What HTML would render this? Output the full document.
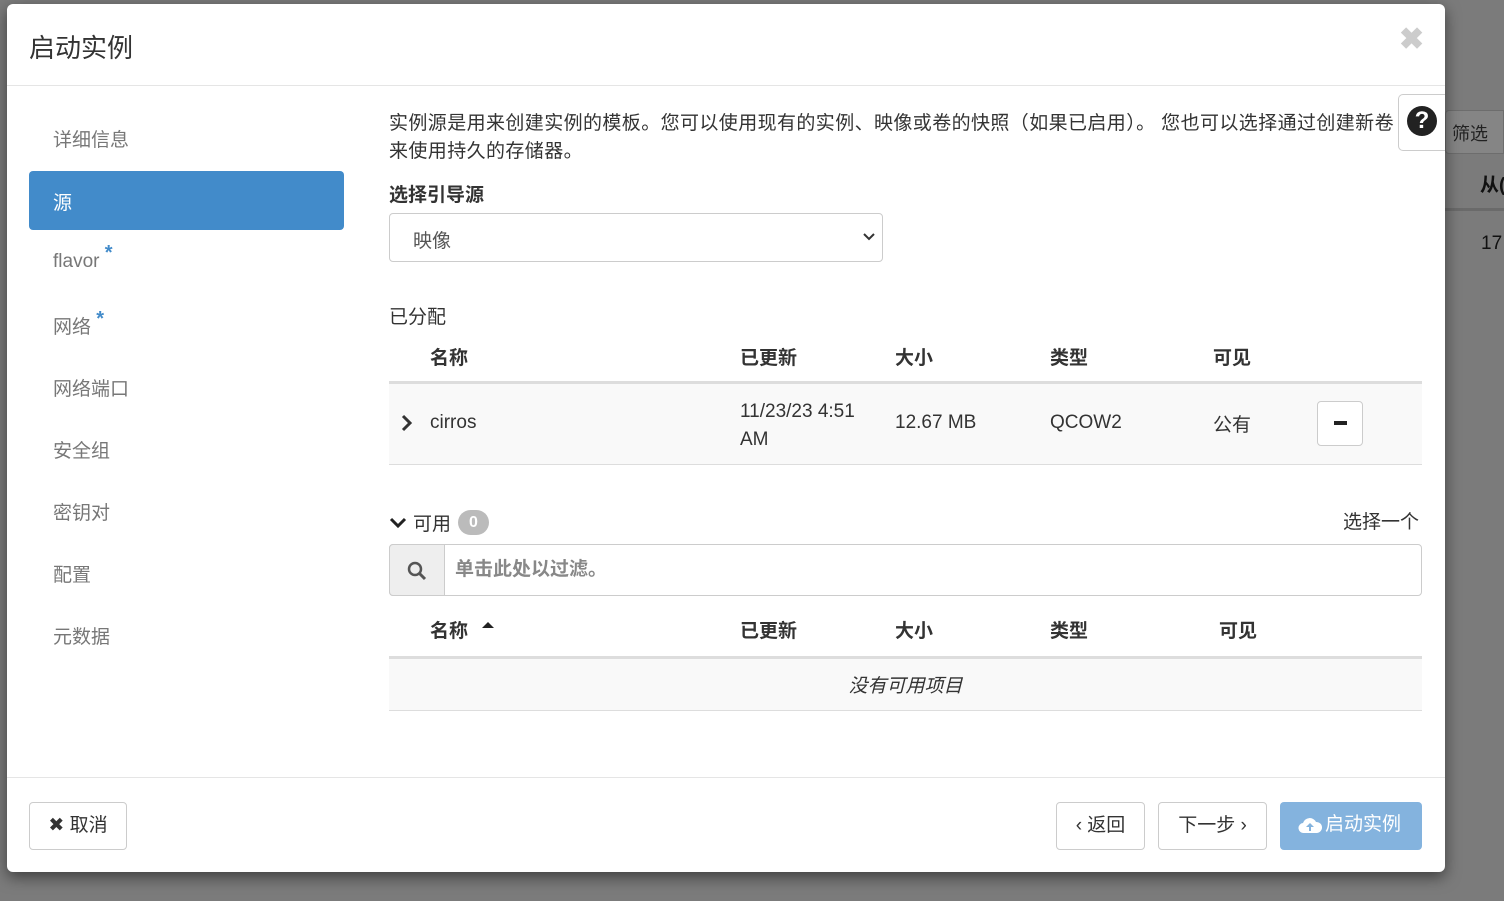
<!DOCTYPE html>
<html style="background:#7b7b7b"><head><meta charset="utf-8"><style>
*{box-sizing:border-box;margin:0;padding:0}
body{width:1504px;height:901px;background:#7b7b7b;font-family:"Liberation Sans","Noto Sans CJK SC",sans-serif;color:#333;position:relative;overflow:hidden}
.a{position:absolute;white-space:nowrap}
.modal{left:7px;top:4px;width:1438px;height:868px;background:#fff;border-radius:6px;box-shadow:0 5px 15px rgba(0,0,0,.5)}
.nav{font-size:19px;color:#777;left:46px}
.h{font-size:19px;font-weight:bold;color:#333}
.btn{border:1px solid #ccc;border-radius:4px;background:#fff;font-size:19px;text-align:center;color:#333}
.st{color:#428bca;font-size:20px;font-weight:bold;position:relative;top:-8px}
</style></head><body>
<div class="a" style="left:0;top:0;width:1504px;height:901px;background:#7b7b7b"></div>
<div class="a" style="left:1445px;top:110px;width:59px;height:44px;background:#858585;border:1px solid #6d6d6d;border-radius:4px 0 0 4px"></div>
<div class="a" style="left:1452px;top:120px;font-size:18px;color:#222">筛选</div>
<div class="a" style="left:1480px;top:170px;font-size:19px;font-weight:bold;color:#111">从(</div>
<div class="a" style="left:1445px;top:208px;width:59px;height:3px;background:#6a6a6a"></div>
<div class="a" style="left:1481px;top:233px;font-size:19px;color:#111">17</div>

<div class="a modal">
<div class="a" style="left:22px;top:24px;font-size:26px;color:#333">启动实例</div>
<div class="a" style="left:1392px;top:18px;font-size:30px;font-weight:bold;color:#ccc">✖</div>
<div class="a" style="left:0;top:81px;width:1438px;height:1px;background:#e5e5e5"></div>

<div class="a nav" style="top:121px">详细信息</div>
<div class="a" style="left:22px;top:167px;width:315px;height:59px;background:#428bca;border-radius:4px"></div>
<div class="a" style="left:46px;top:184px;font-size:19px;color:#fff">源</div>
<div class="a nav" style="top:246px">flavor <span class="st">*</span></div>
<div class="a nav" style="top:308px">网络 <span class="st">*</span></div>
<div class="a nav" style="top:370px">网络端口</div>
<div class="a nav" style="top:432px">安全组</div>
<div class="a nav" style="top:494px">密钥对</div>
<div class="a nav" style="top:556px">配置</div>
<div class="a nav" style="top:618px">元数据</div>

<div class="a" style="left:382px;top:106px;font-size:19px;line-height:28px;width:1010px;overflow:hidden;letter-spacing:0.4px">实例源是用来创建实例的模板。您可以使用现有的实例、映像或卷的快照（如果已启用）。 您也可以选择通过创建新卷<br>来使用持久的存储器。</div>
<div class="a" style="left:1391px;top:90px;width:47px;height:57px;border:1px solid #ccc;border-right:none;border-radius:5px 0 0 5px;background:#fff"></div>
<div class="a" style="left:1400px;top:102px;width:30px;height:30px;border-radius:50%;background:#222;color:#fff;font-weight:bold;font-size:24px;text-align:center;line-height:30px">?</div>

<div class="a h" style="left:382px;top:176px">选择引导源</div>
<div class="a" style="left:382px;top:209px;width:494px;height:49px;border:1px solid #ccc;border-radius:4px"></div>
<div class="a" style="left:406px;top:222px;font-size:19px;color:#555">映像</div>
<svg class="a" style="left:855px;top:227px" width="14" height="12"><path d="M2 3l5 5 5-5" stroke="#333" stroke-width="2" fill="none"/></svg>

<div class="a" style="left:382px;top:298px;font-size:19px">已分配</div>
<div class="a h" style="left:423px;top:339px">名称</div>
<div class="a h" style="left:733px;top:339px">已更新</div>
<div class="a h" style="left:888px;top:339px">大小</div>
<div class="a h" style="left:1043px;top:339px">类型</div>
<div class="a h" style="left:1206px;top:339px">可见</div>
<div class="a" style="left:382px;top:377px;width:1033px;height:84px;background:#f9f9f9;border-top:3px solid #ddd;border-bottom:1px solid #ddd"></div>
<svg class="a" style="left:393px;top:410px" width="14" height="18"><path d="M3 2l7 7-7 7" stroke="#333" stroke-width="3" fill="none"/></svg>
<div class="a" style="left:423px;top:408px;font-size:19px">cirros</div>
<div class="a" style="left:733px;top:394px;font-size:19px;line-height:28px">11/23/23 4:51<br>AM</div>
<div class="a" style="left:888px;top:408px;font-size:19px">12.67 MB</div>
<div class="a" style="left:1043px;top:408px;font-size:19px">QCOW2</div>
<div class="a" style="left:1206px;top:406px;font-size:19px">公有</div>
<div class="a btn" style="left:1310px;top:397px;width:46px;height:45px"></div>
<div class="a" style="left:1327px;top:417px;width:13px;height:4px;background:#222"></div>

<svg class="a" style="left:382px;top:512px" width="18" height="14"><path d="M2 3l7 7 7-7" stroke="#222" stroke-width="3" fill="none"/></svg>
<div class="a" style="left:406px;top:505px;font-size:19px">可用</div>
<div class="a" style="left:451px;top:506px;width:31px;height:25px;border-radius:13px;background:#bbb;color:#fff;font-size:16px;font-weight:bold;text-align:center;line-height:25px">0</div>
<div class="a" style="left:1336px;top:503px;font-size:19px">选择一个</div>
<div class="a" style="left:382px;top:540px;width:1033px;height:52px;border:1px solid #ccc;border-radius:4px"></div>
<div class="a" style="left:382px;top:540px;width:56px;height:52px;background:#eee;border:1px solid #ccc;border-radius:4px 0 0 4px"></div>
<svg class="a" style="left:400px;top:557px" width="20" height="20"><circle cx="8" cy="8" r="6" stroke="#555" stroke-width="2.5" fill="none"/><path d="M12 12l6 6" stroke="#555" stroke-width="3"/></svg>
<div class="a" style="left:448px;top:550px;font-size:19px;font-weight:bold;color:#888">单击此处以过滤。</div>

<div class="a h" style="left:423px;top:612px">名称</div>
<svg class="a" style="left:475px;top:617px" width="12" height="8"><path d="M0 7l6-6 6 6z" fill="#222"/></svg>
<div class="a h" style="left:733px;top:612px">已更新</div>
<div class="a h" style="left:888px;top:612px">大小</div>
<div class="a h" style="left:1043px;top:612px">类型</div>
<div class="a h" style="left:1212px;top:612px">可见</div>
<div class="a" style="left:382px;top:652px;width:1033px;height:55px;background:#f9f9f9;border-top:3px solid #ddd;border-bottom:1px solid #ddd"></div>
<div class="a" style="left:382px;top:667px;width:1033px;text-align:center;font-size:19px;font-style:italic">没有可用项目</div>

<div class="a" style="left:0;top:773px;width:1438px;height:1px;background:#e5e5e5"></div>
<div class="a btn" style="left:22px;top:798px;width:98px;height:48px;line-height:46px">✖ 取消</div>
<div class="a btn" style="left:1049px;top:798px;width:89px;height:48px;line-height:46px">‹ 返回</div>
<div class="a btn" style="left:1151px;top:798px;width:109px;height:48px;line-height:46px">下一步 ›</div>
<div class="a" style="left:1273px;top:798px;width:142px;height:48px;border-radius:4px;background:#84b3de;color:#fff;font-size:19px;line-height:46px;text-align:center;padding-left:24px">启动实例</div>
<svg class="a" style="left:1291px;top:812px" width="24" height="18"><path d="M6 17a5 5 0 0 1-1-10 7 7 0 0 1 13-1 5 5 0 0 1 1 11z" fill="#fff"/><path d="M12 7l-4 4h3v4h2v-4h3z" fill="#84b3de"/></svg>
</div>
</body></html>
